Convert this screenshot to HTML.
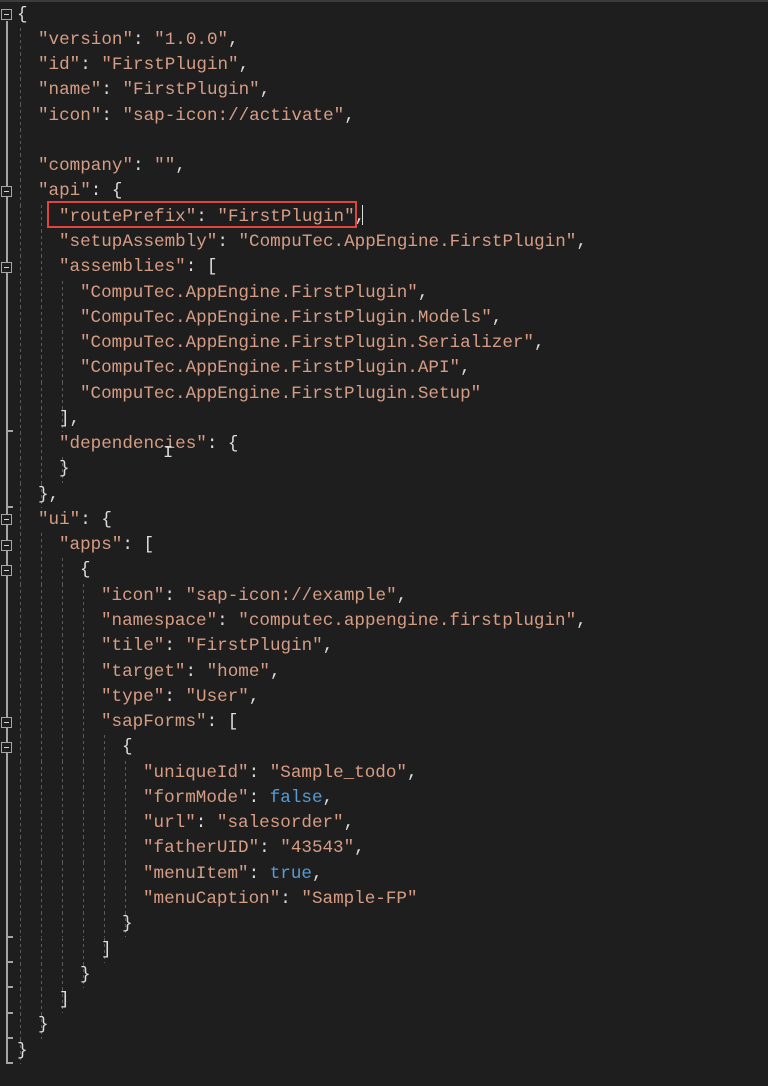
<!DOCTYPE html>
<html><head><meta charset="utf-8"><style>
html,body{margin:0;padding:0;background:#1e1e1e;width:768px;height:1086px;overflow:hidden}
#c{position:relative;width:768px;height:1086px;border-top:2px solid #3c3c3c;box-sizing:border-box}
.l{position:absolute;left:0;height:25px;line-height:25px;font-family:"Liberation Mono",monospace;font-size:17.6px;color:#dcdcdc;white-space:pre}
.s{color:#d69d85}.k{color:#d69d85}.b{color:#569cd6}
.g{position:absolute;width:1px;background:repeating-linear-gradient(to bottom,#5a5a5a 0 3px,transparent 3px 6px)}
.fb{position:absolute;left:1px;width:11px;height:11px;border:1px solid #a5a5a5;background:#1e1e1e;box-sizing:border-box}
.fb:after{content:"";position:absolute;left:2px;top:4px;width:5px;height:1px;background:#d0d0d0}
.fv{position:absolute;left:6px;width:2px;background:#a5a5a5}
.ft{position:absolute;left:6px;width:7px;height:2px;background:#a5a5a5}
</style></head><body><div id="c">
<div id="lines"></div>
<div style="position:absolute;left:47px;top:199px;width:310px;height:27px;border:2px solid #e0443e;box-sizing:border-box"></div>
<div style="position:absolute;left:362px;top:203px;width:1px;height:20px;background:#dcdcdc"></div>
<div style="position:absolute;left:163px;top:442px;color:#dcdcdc;font:17px 'Liberation Mono',monospace">I</div>
</div>
<script>
var L=[
[0,'{'],
[1,'<span class="k">"version"</span>: <span class="s">"1.0.0"</span>,'],
[1,'<span class="k">"id"</span>: <span class="s">"FirstPlugin"</span>,'],
[1,'<span class="k">"name"</span>: <span class="s">"FirstPlugin"</span>,'],
[1,'<span class="k">"icon"</span>: <span class="s">"sap-icon://activate"</span>,'],
[1,''],
[1,'<span class="k">"company"</span>: <span class="s">""</span>,'],
[1,'<span class="k">"api"</span>: {'],
[2,'<span class="k">"routePrefix"</span>: <span class="s">"FirstPlugin"</span>,'],
[2,'<span class="k">"setupAssembly"</span>: <span class="s">"CompuTec.AppEngine.FirstPlugin"</span>,'],
[2,'<span class="k">"assemblies"</span>: ['],
[3,'<span class="s">"CompuTec.AppEngine.FirstPlugin"</span>,'],
[3,'<span class="s">"CompuTec.AppEngine.FirstPlugin.Models"</span>,'],
[3,'<span class="s">"CompuTec.AppEngine.FirstPlugin.Serializer"</span>,'],
[3,'<span class="s">"CompuTec.AppEngine.FirstPlugin.API"</span>,'],
[3,'<span class="s">"CompuTec.AppEngine.FirstPlugin.Setup"</span>'],
[2,'],'],
[2,'<span class="k">"dependencies"</span>: {'],
[2,'}'],
[1,'},'],
[1,'<span class="k">"ui"</span>: {'],
[2,'<span class="k">"apps"</span>: ['],
[3,'{'],
[4,'<span class="k">"icon"</span>: <span class="s">"sap-icon://example"</span>,'],
[4,'<span class="k">"namespace"</span>: <span class="s">"computec.appengine.firstplugin"</span>,'],
[4,'<span class="k">"tile"</span>: <span class="s">"FirstPlugin"</span>,'],
[4,'<span class="k">"target"</span>: <span class="s">"home"</span>,'],
[4,'<span class="k">"type"</span>: <span class="s">"User"</span>,'],
[4,'<span class="k">"sapForms"</span>: ['],
[5,'{'],
[6,'<span class="k">"uniqueId"</span>: <span class="s">"Sample_todo"</span>,'],
[6,'<span class="k">"formMode"</span>: <span class="b">false</span>,'],
[6,'<span class="k">"url"</span>: <span class="s">"salesorder"</span>,'],
[6,'<span class="k">"fatherUID"</span>: <span class="s">"43543"</span>,'],
[6,'<span class="k">"menuItem"</span>: <span class="b">true</span>,'],
[6,'<span class="k">"menuCaption"</span>: <span class="s">"Sample-FP"</span>'],
[5,'}'],
[4,']'],
[3,'}'],
[2,']'],
[1,'}'],
[0,'}']];
var h='',H=25.27;
L.forEach(function(a,i){
 var top=13+H*i-12.5;
 var d=a[0]; if(i==18)d=3; if(i==19)d=2;
 if(i==16)d=3;if(i==36)d=6;if(i==37)d=5;if(i==38)d=4;if(i==39)d=3;if(i==40)d=2;if(i==41)d=1;
 for(var k=0;k<d;k++){ if(i==0||i==41&&k>0)continue;
  h+='<div class="g" style="left:'+(20+21*k)+'px;top:'+top.toFixed(1)+'px;height:25.3px"></div>';}
 h+='<div class="l" style="top:'+top.toFixed(1)+'px;left:'+(17+21*a[0])+'px">'+a[1]+'</div>';
});
var folds=[0,7,10,20,21,22,28,29];
h+='<div class="fv" style="top:19px;height:'+(13+H*41+12.5-19).toFixed(0)+'px"></div>';
[16,19,36,37,38,39,40,41].forEach(function(i){h+='<div class="ft" style="top:'+(13+H*i+11).toFixed(0)+'px"></div>';});
folds.forEach(function(i){h+='<div class="fb" style="top:'+(13+H*i-6).toFixed(0)+'px"></div>';});
document.getElementById('lines').innerHTML=h;
</script>
</body></html>
